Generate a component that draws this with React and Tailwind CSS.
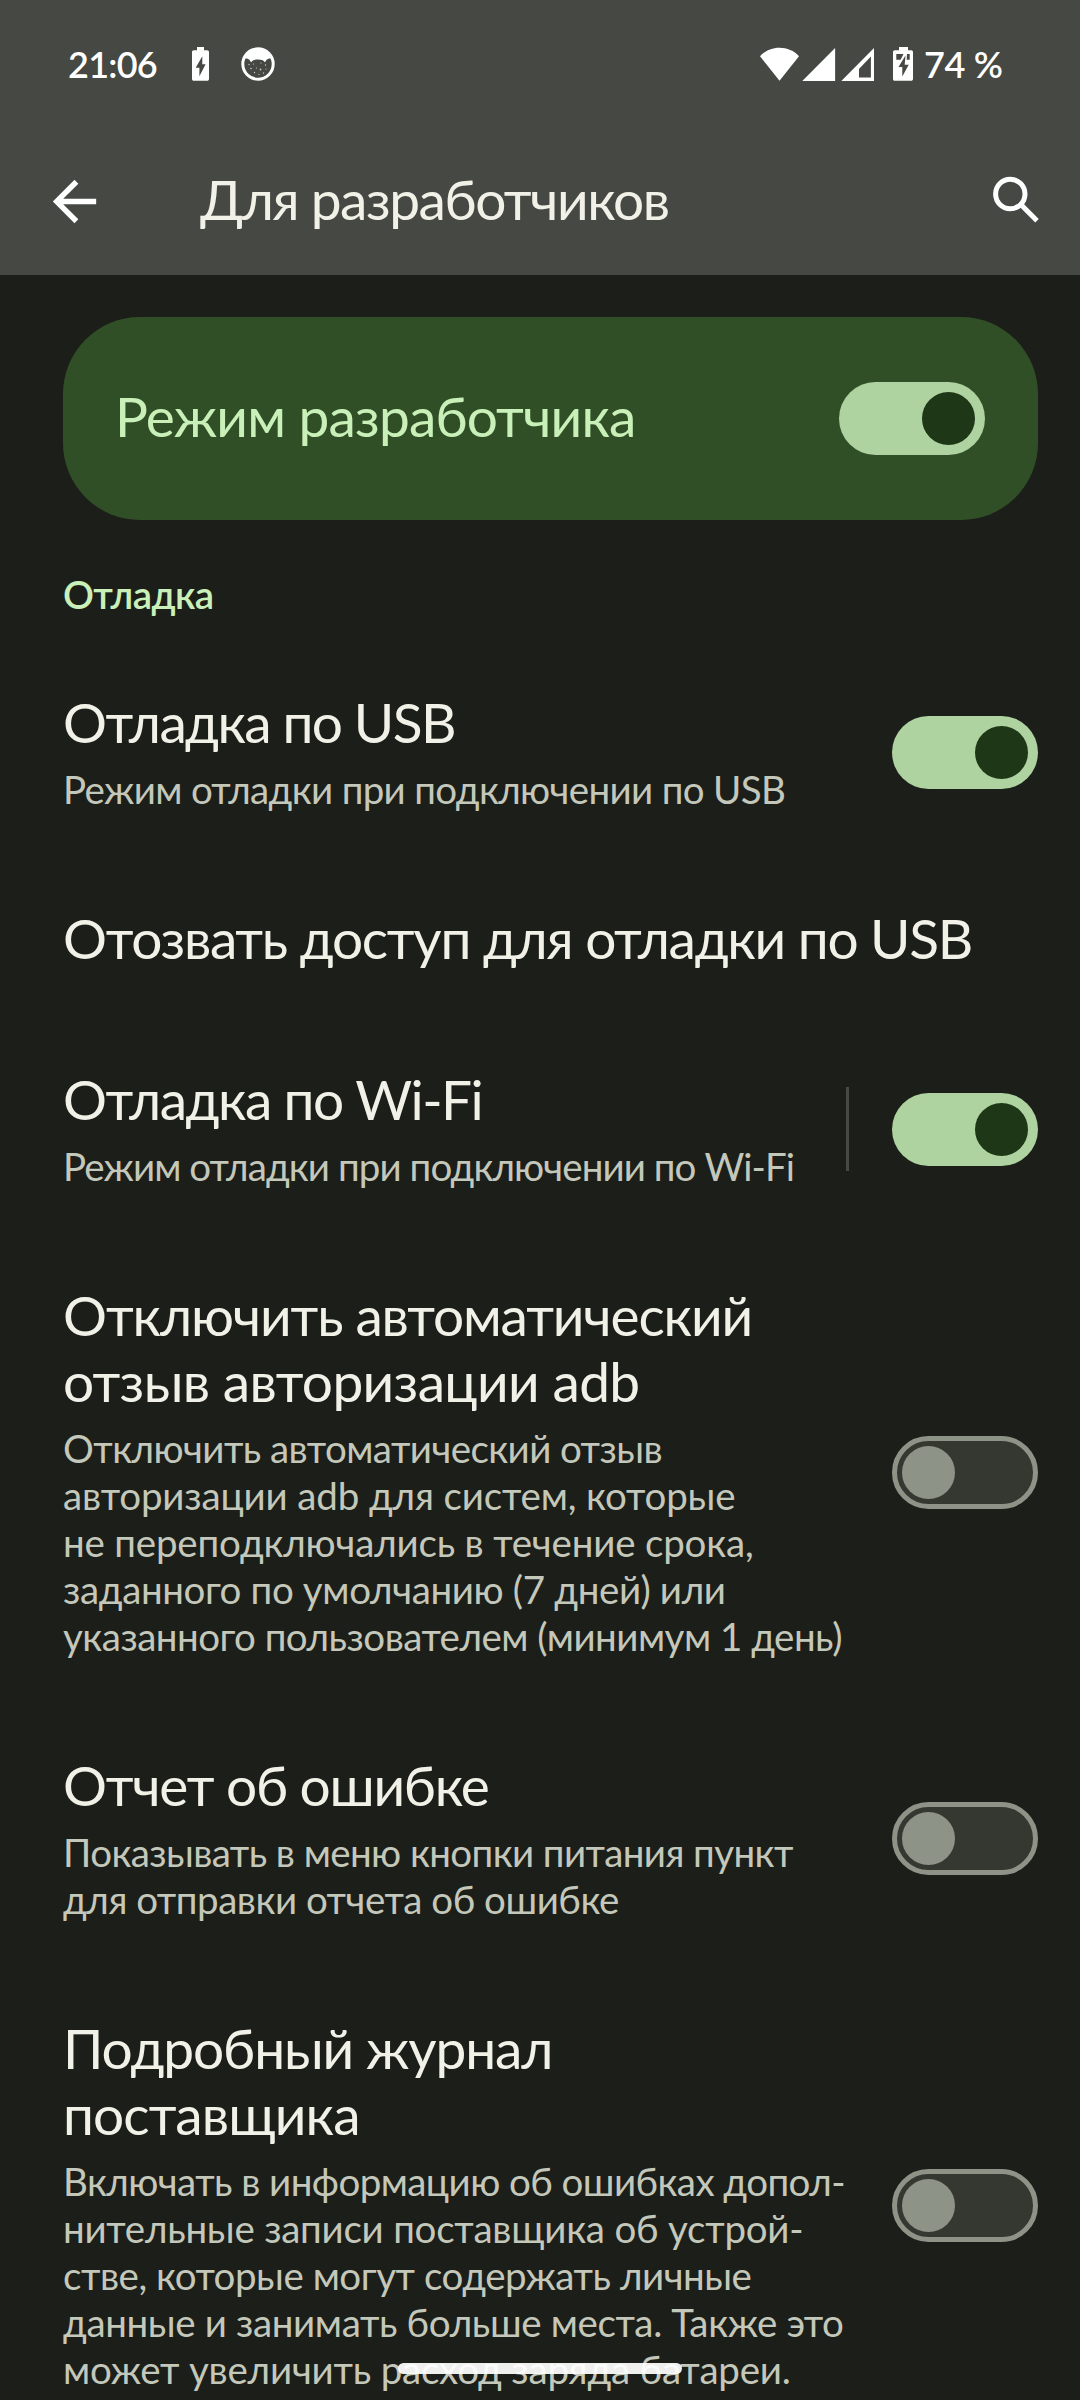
function BackIcon() {
  return (
    <svg viewBox="0 0 24 24" className="size-[65px] shrink-0" fill="#ffffff">
      <path d="M20 11H7.83l5.59-5.59L12 4l-8 8 8 8 1.41-1.41L7.83 13H20v-2z" />
    </svg>
  );
}

function SearchIcon() {
  return (
    <svg viewBox="0 0 48 48" className="mb-[3px] size-12 shrink-0" fill="none" stroke="#ffffff" strokeWidth="5">
      <circle cx="18.3" cy="18" r="14.7" />
      <path d="M28.6 28.2L45 44.8" />
    </svg>
  );
}

function ChargingIcon() {
  return (
    <svg viewBox="0 0 17 34" className="h-[34px] w-[17px] shrink-0">
      <path d="M5 0h7v3.3h3.2c1 0 1.8.8 1.8 1.8v26.8c0 1-.8 1.800-1.800 1.800H1.800c-1 0-1.800-.8-1.800-1.800V5.100c0-1 .8-1.800 1.800-1.800H5z" fill="#ffffff" />
      <path d="M10.300 9.300L3.700 20.800h3.700v8.500L13.600 17.300h-3.300z" fill="#464843" />
    </svg>
  );
}

function CatIcon() {
  return (
    <svg viewBox="0 0 34 34" className="size-[34px] shrink-0">
      <circle cx="17" cy="17" r="16.700" fill="#ffffff" />
      <path d="M4.600 11.500c1.500 0 2.700.5 3.800 1.300l1.600 2.400 2.200-2c3-.8 6.500-.8 9.600 0l2.200 2 1.600-2.400c1.100-.8 2.300-1.300 3.800-1.300 1 1.800 1.300 3.600 1.300 5.500a13.700 13.700 0 0 1-27.400 0c0-1.900.3-3.700 1.300-5.500z" fill="#464843" />
      <g fill="#ffffff" opacity=".7">
        <circle cx="8" cy="17.500" r=".7" />
        <circle cx="12.500" cy="17" r=".6" />
        <circle cx="20" cy="16" r=".6" />
        <circle cx="24.500" cy="18" r=".7" />
        <circle cx="10" cy="21.500" r=".8" />
        <circle cx="15.500" cy="21" r=".6" />
        <circle cx="19.500" cy="22.500" r=".9" />
        <circle cx="25" cy="22" r=".6" />
        <circle cx="13.500" cy="25.500" r=".7" />
        <circle cx="18" cy="27.500" r=".6" />
        <circle cx="22.500" cy="26" r=".7" />
      </g>
    </svg>
  );
}

function StatusSignals() {
  return (
    <svg viewBox="0 0 153 34" className="h-[34px] w-[153px] shrink-0" fill="#ffffff">
      <path d="M0 9.200C5 3.600 12 .7 19.500.7S34 3.600 39 9.200L19.500 33.700z" />
      <path d="M75.100 1v32.900H42.300z" />
      <path fillRule="evenodd" d="M114 1v32.900H81.300zM110.900 9.400L99 22v8.500h11.900z" />
      <path d="M139 0h9v3.300h3.200c1 0 1.800.8 1.800 1.800v26.800c0 1-.8 1.800-1.800 1.800h-16.400c-1 0-1.800-.8-1.800-1.800V5.100c0-1 .8-1.800 1.800-1.800h4.200z" />
      <path d="M136.300 7h7.200l-2.900 5.700h-4.300zM147 7h2.700v5.700h-3z" fill="#464843" />
      <path d="M145.500 8.500L138.500 20h3.800v9.500l6.400-11.800h-4z" fill="#464843" />
    </svg>
  );
}

function Switch({ on }) {
  return on ? (
    <div className="flex h-[73px] w-[146px] shrink-0 items-center justify-end rounded-full bg-[#afd3a0] px-[10px]">
      <div className="size-[53px] rounded-full bg-[#1e3716]" />
    </div>
  ) : (
    <div className="flex h-[73px] w-[146px] shrink-0 items-center rounded-full border-[5px] border-[#8e9387] bg-[#353731] px-[5px]">
      <div className="size-[53px] rounded-full bg-[#8e9387]" />
    </div>
  );
}

const settings = [
  {
    title: [["Отладка по USB", "tracking-[-1.62px]"]],
    summary: [["Режим отладки при подключении по USB", "tracking-[-0.65px]"]],
    toggle: "on",
  },
  { title: [["Отозвать доступ для отладки по USB", "tracking-[-1.28px]"]] },
  {
    title: [["Отладка по Wi-Fi", "tracking-[-1.5px]"]],
    summary: [["Режим отладки при подключении по Wi-Fi", "tracking-[-0.91px]"]],
    toggle: "on",
    divider: true,
  },
  {
    title: [
      ["Отключить автоматический", "tracking-[-1.13px]"],
      ["отзыв авторизации adb", "tracking-[-0.63px]"],
    ],
    summary: [
      ["Отключить автоматический отзыв", "tracking-[-0.56px]"],
      ["авторизации adb для систем, которые", "tracking-[-0.14px]"],
      ["не переподключались в течение срока,", "tracking-[-0.18px]"],
      ["заданного по умолчанию (7 дней) или", "tracking-[-0.36px]"],
      ["указанного пользователем (минимум 1 день)", "tracking-[-0.5px]"],
    ],
    toggle: "off",
  },
  {
    title: [["Отчет об ошибке", "tracking-[-1.28px]"]],
    summary: [
      ["Показывать в меню кнопки питания пункт", "tracking-[-0.58px]"],
      ["для отправки отчета об ошибке", "tracking-[-0.47px]"],
    ],
    toggle: "off",
  },
  {
    title: [
      ["Подробный журнал", "tracking-[-1.12px]"],
      ["поставщика", "tracking-[-0.9px]"],
    ],
    summary: [
      ["Включать в информацию об ошибках допол-", "tracking-[-0.56px]"],
      ["нительные записи поставщика об устрой-", "tracking-[-0.23px]"],
      ["стве, которые могут содержать личные", "tracking-[-0.46px]"],
      ["данные и занимать больше места. Также это", "tracking-[-0.36px]"],
      ["может увеличить расход заряда батареи.", "tracking-[-0.2px]"],
    ],
    toggle: "off",
  },
];

function Setting({ title, summary, toggle, divider }) {
  return (
    <li className={summary ? "flex items-center pt-[43px] pb-[49px]" : "flex items-center pt-[43px] pb-[52px]"}>
      <div className="min-w-0 flex-1 whitespace-nowrap">
        <h3 className="text-[55px] leading-[66px] text-[#f1f1e8]">
          {title.map(([text, tracking]) => (
            <span key={text} className={`block ${tracking}`}>{text}</span>
          ))}
        </h3>
        {summary && (
          <p className="mt-[11px] text-[38.5px] leading-[47px] text-[#c4c8bb]">
            {summary.map(([text, tracking]) => (
              <span key={text} className={`block ${tracking}`}>{text}</span>
            ))}
          </p>
        )}
      </div>
      {divider && <div className="mt-px mr-[43px] h-[84px] w-[3px] shrink-0 bg-[#474943]" />}
      {toggle && (
        <div className="pt-[2px]">
          <Switch on={toggle === "on"} />
        </div>
      )}
    </li>
  );
}

export default function App() {
  return (
    <div className="relative h-[2400px] w-[1080px] overflow-hidden bg-[#1c1e19] font-['Lato',sans-serif]">
      <header className="h-[275px] bg-[#464843] text-white">
        <div className="flex h-32 items-center pr-[77px] pl-[68px] text-[36px] font-semibold">
          <span className="w-[124px] tracking-[-0.75px]">21:06</span>
          <ChargingIcon />
          <div className="ml-8">
            <CatIcon />
          </div>
          <div className="ml-auto flex items-center gap-[11px]">
            <StatusSignals />
            <span className="w-[79px] whitespace-nowrap tracking-[-0.35px]">74 %</span>
          </div>
        </div>
        <div className="flex h-[147px] items-center pr-[40px] pl-[42px]">
          <BackIcon />
          <h1 className="ml-[93px] flex-1 pb-[5px] text-[55px] leading-[66px] tracking-[-1.46px] text-[#f1f1e8]">
            Для разработчиков
          </h1>
          <SearchIcon />
        </div>
      </header>

      <main className="pr-[42px] pl-[63px]">
        <section className="mt-[42px] flex h-[203px] items-center justify-between rounded-[77px] bg-[#314f27] pr-[53px] pl-[52px]">
          <h2 className="pb-[6px] text-[55px] leading-[66px] tracking-[-0.8px] text-[#c9f0b8]">Режим разработчика</h2>
          <Switch on />
        </section>

        <h2 className="mt-[51px] text-[38.5px] leading-[47px] font-semibold tracking-[-0.6px] text-[#c9f0b8]">Отладка</h2>

        <ul className="mt-[28px]">
          {settings.map((item) => (
            <Setting key={item.title[0][0]} {...item} />
          ))}
        </ul>
      </main>

      <div className="absolute top-[2363px] left-[398px] h-[11px] w-[284px] rounded-full bg-white/93" />
    </div>
  );
}
